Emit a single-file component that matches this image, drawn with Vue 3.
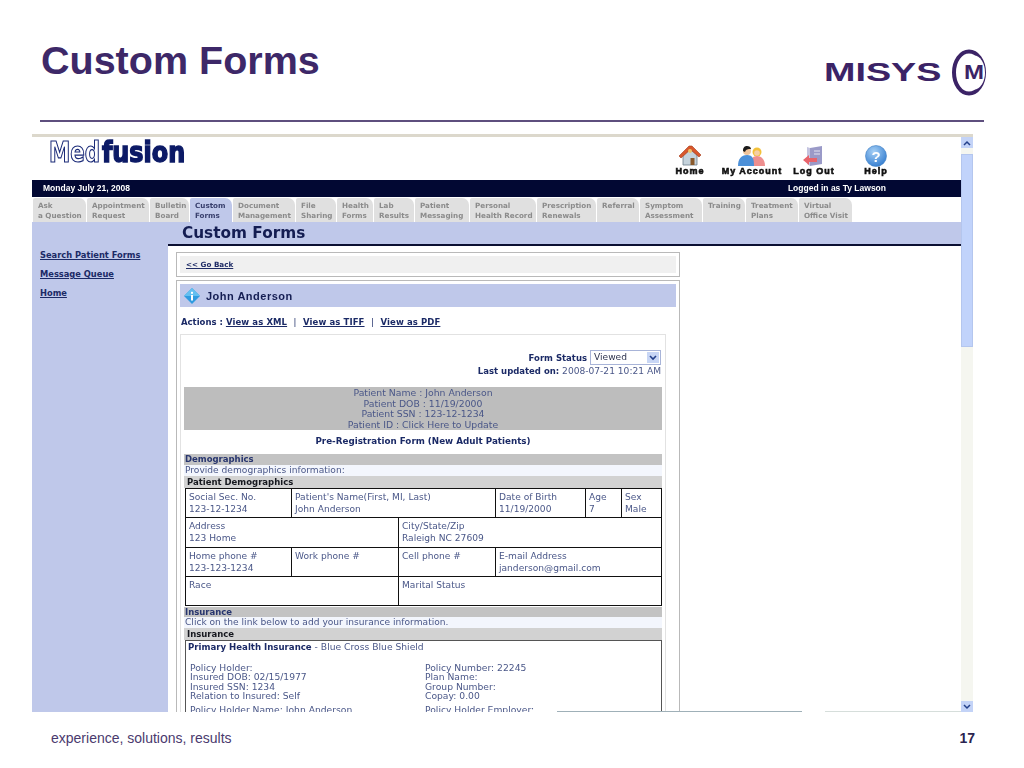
<template>
  <div class="slide">
    <header class="slide-head">
      <h1>Custom Forms</h1>
      <svg class="misys" width="164" height="50" viewBox="0 0 164 50">
        <text transform="translate(0 34) scale(1.51 1)" class="misys-word">MISYS</text>
        <ellipse cx="145" cy="25.500" rx="15" ry="21" fill="none" stroke="#3b2366" stroke-width="4" />
        <ellipse cx="150" cy="25.500" rx="11" ry="17" fill="#fff" />
        <text x="140" y="32" textLength="20" lengthAdjust="spacingAndGlyphs" class="misys-m">M</text>
      </svg>
    </header>
    <div class="rule"></div>

    <section class="screen">
      <div class="app">
        <div class="brand-row">
          <svg class="medfusion" width="140" height="30" viewBox="0 0 140 30">
            <text transform="translate(1 25) scale(.82 1)" class="med">Med</text>
            <text transform="translate(54 25) scale(.915 1)" class="fusion">fusion</text>
          </svg>
          <nav class="top-nav">
            <a class="top-item">
              <svg width="24" height="22" viewBox="0 0 24 22">
                <path d="M5 10v10h14V10L12 4z" fill="#c5d3dc" stroke="#6d7f8c" stroke-width=".8" />
                <rect x="12.500" y="13" width="4" height="7" fill="#8a5a2c" />
                <path d="M1 11 11 1h3l9 9-2 2-8.500-7.500L3 13z" fill="#d8572c" stroke="#a33a18" stroke-width=".6" />
                <circle cx="12" cy="6" r="2" fill="#f2c46a" />
              </svg>
              <span>Home</span>
            </a>
            <a class="top-item">
              <svg width="30" height="22" viewBox="0 0 30 22">
                <circle cx="20" cy="7" r="4.500" fill="#f3c13a" />
                <path d="M13 21c0-7 3-10 7-10s8 3 8 10z" fill="#ee8f8f" />
                <circle cx="20" cy="8" r="2.800" fill="#f6cfa5" />
                <circle cx="10" cy="6" r="4" fill="#f0c49a" />
                <path d="M6 6c0-4 2-5 4-5s4 1 4 3c-3 0-5 0-6 3z" fill="#1c1c1c" />
                <path d="M1 21c0-7 3-11 9-11s7 4 7 11z" fill="#4c90d8" />
              </svg>
              <span>My Account</span>
            </a>
            <a class="top-item">
              <svg width="24" height="22" viewBox="0 0 24 22">
                <path d="M8 3l12-2v18l-12 2z" fill="#9a9ac8" />
                <path d="M5 2l3 1v18l-3-2z" fill="#c4c4e0" />
                <path d="M12 6h6M12 9h6" stroke="#e4e4f2" stroke-width="1.200" />
                <path d="M1 15l6-5v3h8v4H7v3z" fill="#e8646c" />
              </svg>
              <span>Log Out</span>
            </a>
            <a class="top-item">
              <svg width="24" height="22" viewBox="0 0 24 22">
                <defs>
                  <radialGradient id="helpBall" cx=".4" cy=".3" r=".8">
                    <stop offset="0" stop-color="#a6d0f6" />
                    <stop offset="1" stop-color="#2a76cc" />
                  </radialGradient>
                </defs>
                <circle cx="12" cy="11" r="10.500" fill="url(#helpBall)" stroke="#3f7fc4" stroke-width=".6" />
                <text x="12" y="16.500" text-anchor="middle" class="help-q">?</text>
              </svg>
              <span>Help</span>
            </a>
          </nav>
        </div>

        <div class="date-bar">
          <span>Monday July 21, 2008</span>
          <span class="logged">Logged in as Ty Lawson</span>
        </div>

        <div class="tabs">
          <div
            v-for="tab in tabs"
            :key="tab.top"
            class="tab"
            :class="{ active: tab.active }"
            :style="{ width: tab.w + 'px' }"
          >
            {{ tab.top }}<br />{{ tab.bottom }}
          </div>
        </div>

        <div class="page-body">
          <aside class="side">
            <a>Search Patient Forms</a>
            <a>Message Queue</a>
            <a>Home</a>
          </aside>

          <main class="main">
            <div class="page-title"><h2>Custom Forms</h2></div>

            <div class="panels">
              <div class="panel back-panel">
                <div class="back-inner"><a>&lt;&lt; Go Back</a></div>
              </div>

              <div class="panel form-panel">
                <div class="patient-bar">
                  <svg width="16" height="16" viewBox="0 0 16 16">
                    <path d="M8 0l8 8-8 8-8-8z" fill="#2f9be0" />
                    <path d="M8 0l8 8H0z" fill="#63bff0" />
                    <rect x="7" y="7" width="2" height="5.500" fill="#fff" />
                    <rect x="7" y="3.800" width="2" height="2" fill="#fff" />
                  </svg>
                  <span>John Anderson</span>
                </div>

                <div class="actions">
                  <b>Actions :</b>
                  <a>View as XML</a><i>|</i><a>View as TIFF</a><i>|</i><a>View as PDF</a>
                </div>

                <div class="form-box">
                  <div class="status-row">
                    <b>Form Status</b>
                    <div class="select">
                      <span>Viewed</span>
                      <em><svg width="8" height="6" viewBox="0 0 8 6"><path d="M1 1l3 3 3-3" fill="none" stroke="#24408a" stroke-width="1.600" /></svg></em>
                    </div>
                  </div>
                  <div class="updated"><b>Last updated on:</b> 2008-07-21 10:21 AM</div>

                  <div class="patient-info">
                    Patient Name : John Anderson<br />
                    Patient DOB : 11/19/2000<br />
                    Patient SSN : 123-12-1234<br />
                    Patient ID : Click Here to Update
                  </div>

                  <div class="form-title">Pre-Registration Form (New Adult Patients)</div>

                  <div class="sec-bar">Demographics</div>
                  <div class="sec-note">Provide demographics information:</div>
                  <div class="sub-bar">Patient Demographics</div>
                  <div class="demo-grid">
                    <div v-for="cell in demoCells" :key="cell.label" class="cell" :style="{ gridColumn: cell.col }">
                      {{ cell.label }}<br />{{ cell.value }}
                    </div>
                  </div>

                  <div class="sec-bar ins-gap">Insurance</div>
                  <div class="sec-note">Click on the link below to add your insurance information.</div>
                  <div class="sub-bar">Insurance</div>
                  <div class="ins-box">
                    <div class="ins-head"><b>Primary Health Insurance</b> - Blue Cross Blue Shield</div>
                    <div class="ins-cols">
                      <div>
                        Policy Holder:<br />Insured DOB: 02/15/1977<br />Insured SSN: 1234<br />Relation to Insured: Self
                      </div>
                      <div>
                        Policy Number: 22245<br />Plan Name:<br />Group Number:<br />Copay: 0.00
                      </div>
                    </div>
                    <div class="ins-cols ins-next">
                      <div>Policy Holder Name: John Anderson</div>
                      <div>Policy Holder Employer:</div>
                    </div>
                  </div>
                </div>
              </div>
            </div>
          </main>
        </div>
      </div>

      <div class="scrollbar">
        <div class="sb-btn"><svg width="8" height="6" viewBox="0 0 8 6"><path d="M1 5l3-3 3 3" fill="none" stroke="#24408a" stroke-width="1.500" /></svg></div>
        <div class="sb-thumb"></div>
        <div class="sb-track"></div>
        <div class="sb-btn"><svg width="8" height="6" viewBox="0 0 8 6"><path d="M1 1l3 3 3-3" fill="none" stroke="#24408a" stroke-width="1.500" /></svg></div>
      </div>

      <div class="cut-edge cut-a"></div>
      <div class="cut-edge cut-b"></div>
    </section>

    <footer class="slide-foot">
      <span>experience, solutions, results</span>
      <b>17</b>
    </footer>
  </div>
</template>

<script setup>
const tabs = [
  { top: "Ask", bottom: "a Question", w: 53 },
  { top: "Appointment", bottom: "Request", w: 62 },
  { top: "Bulletin", bottom: "Board", w: 39 },
  { top: "Custom", bottom: "Forms", w: 42, active: true },
  { top: "Document", bottom: "Management", w: 62 },
  { top: "File", bottom: "Sharing", w: 40 },
  { top: "Health", bottom: "Forms", w: 36 },
  { top: "Lab", bottom: "Results", w: 40 },
  { top: "Patient", bottom: "Messaging", w: 54 },
  { top: "Personal", bottom: "Health Record", w: 66 },
  { top: "Prescription", bottom: "Renewals", w: 59 },
  { top: "Referral", bottom: "", w: 42 },
  { top: "Symptom", bottom: "Assessment", w: 62 },
  { top: "Training", bottom: "", w: 42 },
  { top: "Treatment", bottom: "Plans", w: 52 },
  { top: "Virtual", bottom: "Office Visit", w: 53 },
];

const demoCells = [
  { label: "Social Sec. No.", value: "123-12-1234", col: "1 / 2" },
  { label: "Patient's Name(First, MI, Last)", value: "John Anderson", col: "2 / 4" },
  { label: "Date of Birth", value: "11/19/2000", col: "4 / 5" },
  { label: "Age", value: "7", col: "5 / 6" },
  { label: "Sex", value: "Male", col: "6 / 7" },
  { label: "Address", value: "123 Home", col: "1 / 3" },
  { label: "City/State/Zip", value: "Raleigh NC 27609", col: "3 / 7" },
  { label: "Home phone #", value: "123-123-1234", col: "1 / 2" },
  { label: "Work phone #", value: "", col: "2 / 3" },
  { label: "Cell phone #", value: "", col: "3 / 4" },
  { label: "E-mail Address", value: "janderson@gmail.com", col: "4 / 7" },
  { label: "Race", value: "", col: "1 / 3" },
  { label: "Marital Status", value: "", col: "3 / 7" },
];
</script>

<style>
html,
body {
  margin: 0;
  background: #fff;
}
</style>

<style scoped>
.slide {
  width: 1024px;
  height: 768px;
  overflow: hidden;
  background: #fff;
  font-family: "Liberation Sans", Arial, sans-serif;
}

.slide-head {
  height: 120px;
  display: flex;
  justify-content: space-between;
  padding: 0 36px 0 41px;
  box-sizing: border-box;
}

h1 {
  margin: 40px 0 0;
  font-size: 39.500px;
  line-height: 41px;
  font-weight: 700;
  color: #3d2868;
}

.misys {
  margin-top: 47px;
}

.misys-word {
  font: 700 25px "Liberation Sans", sans-serif;
  fill: #3b2366;
}

.misys-m {
  font: 700 21px "Liberation Sans", sans-serif;
  fill: #3b2366;
}

.rule {
  height: 2px;
  margin: 0 40px;
  background: #5e4f7e;
}

.screen {
  position: relative;
  width: 941px;
  height: 578px;
  margin: 12px 0 0 32px;
  display: flex;
  overflow: hidden;
  border-top: 3px solid #dcd8cc;
  box-sizing: border-box;
  font-family: "DejaVu Sans", Verdana, sans-serif;
  filter: blur(0.4px);
}

.app {
  width: 929px;
  flex: none;
  display: flex;
  flex-direction: column;
}

.brand-row {
  height: 43px;
  display: flex;
  justify-content: space-between;
  flex: none;
}

.medfusion {
  margin: 0 0 0 16px;
  overflow: visible;
}

.med {
  font: 700 29px "DejaVu Sans Condensed", "Liberation Sans", sans-serif;
  fill: #fff;
  stroke: #1a2a78;
  stroke-width: 1.200px;
}

.fusion {
  font: 700 29px "DejaVu Sans Condensed", "Liberation Sans", sans-serif;
  fill: #0c1a66;
  stroke: #0c1a66;
  stroke-width: 1.400px;
}

.top-nav {
  display: flex;
  padding: 8px 54px 0 0;
}

.top-item {
  width: 62px;
  display: flex;
  flex-direction: column;
  align-items: center;
}

.top-item svg {
  display: block;
  height: 22px;
}

.top-item span {
  font: 700 9px/9px "Liberation Sans", sans-serif;
  letter-spacing: 1px;
  color: #111;
  -webkit-text-stroke: 0.6px #111;
  white-space: nowrap;
}

.help-q {
  font: 700 15px "Liberation Sans", sans-serif;
  fill: #fff;
}

.date-bar {
  height: 17px;
  flex: none;
  background: #020833;
  color: #fff;
  font: 700 8.500px/17px "Liberation Sans", sans-serif;
  display: flex;
  justify-content: space-between;
  padding: 0 75px 0 11px;
}

.tabs {
  height: 25px;
  flex: none;
  display: flex;
  padding: 1px 0 0 1px;
  box-sizing: border-box;
}

.tab {
  flex: none;
  box-sizing: border-box;
  margin-right: 1px;
  padding: 3px 0 0 5px;
  background: #e0e0e0;
  border-top-right-radius: 7px;
  border-top-left-radius: 2px;
  color: #8b8b8b;
  font-size: 7.200px;
  font-weight: 700;
  line-height: 9.500px;
  white-space: nowrap;
  overflow: hidden;
}

.tab.active {
  background: #bfc8ea;
  color: #39406e;
}

.page-body {
  flex: 1;
  min-height: 0;
  display: flex;
}

.side {
  width: 136px;
  flex: none;
  background: #bfc8ea;
  display: flex;
  flex-direction: column;
  gap: 9px;
  padding: 28px 0 0 8px;
  box-sizing: border-box;
}

.side a {
  font-size: 8.300px;
  line-height: 10px;
  font-weight: 700;
  color: #1b2a66;
  text-decoration: underline;
}

.main {
  flex: 1;
  min-width: 0;
}

.page-title {
  height: 24px;
  box-sizing: border-box;
  background: #bfc8ea;
  border-bottom: 2px solid #0b1033;
  padding-left: 14px;
}

h2 {
  margin: 0;
  font-size: 15.300px;
  line-height: 23px;
  color: #141d52;
}

.panels {
  width: 504px;
  margin: 6px 0 0 8px;
}

.panel {
  border: 1px solid #b9b9b9;
  box-sizing: border-box;
  padding: 3px;
  background: #fff;
}

.back-panel {
  height: 25px;
  margin-bottom: 3px;
}

.back-inner {
  height: 17px;
  background: #f0f0f0;
  padding-left: 6px;
  font: 700 7.200px/17px "DejaVu Sans", sans-serif;
  color: #1f2c66;
}

.back-inner a,
.actions a {
  text-decoration: underline;
}

.form-panel {
  height: 440px;
  overflow: hidden;
}

.patient-bar {
  height: 23px;
  background: #bfc8ea;
  display: flex;
  align-items: center;
  gap: 6px;
  padding-left: 4px;
  font: 700 11px "Liberation Sans", sans-serif;
  letter-spacing: 0.5px;
  color: #141d52;
}

.actions {
  height: 27px;
  padding-left: 1px;
  font-size: 8.500px;
  line-height: 31px;
  font-weight: 700;
  letter-spacing: 0.1px;
  color: #1b2a66;
  white-space: nowrap;
}

.actions b {
  margin-right: 3px;
  letter-spacing: 0;
}

.actions i {
  margin: 0 6.500px;
  font-style: normal;
  font-weight: 400;
}

.form-box {
  width: 486px;
  height: 390px;
  box-sizing: border-box;
  border: 1px solid #e2e2e2;
  padding: 15px 3px 0 3px;
  color: #4a5788;
  font-size: 9.100px;
}

.status-row {
  display: flex;
  justify-content: flex-end;
  align-items: center;
  gap: 3px;
  height: 15px;
  margin-right: 1px;
  font-weight: 400;
  color: #1b2a66;
}

.status-row b {
  font-size: 8.500px;
}

.select {
  width: 71px;
  height: 15px;
  box-sizing: border-box;
  border: 1px solid #a8b4d8;
  display: flex;
  justify-content: space-between;
  padding-left: 3px;
  line-height: 13px;
  color: #2f3550;
}

.select em {
  width: 12px;
  margin: 1px;
  background: #c8d6f5;
  display: flex;
  align-items: center;
  justify-content: center;
}

.updated {
  height: 22px;
  margin-right: 1px;
  text-align: right;
  line-height: 13px;
}

.updated b {
  color: #1b2a66;
  font-size: 8.500px;
}

.patient-info {
  height: 43px;
  box-sizing: border-box;
  padding-top: 1px;
  background: #bdbdbd;
  text-align: center;
  font-size: 9.300px;
  line-height: 10.700px;
}

.form-title {
  height: 24px;
  text-align: center;
  font-size: 8.750px;
  line-height: 23px;
  font-weight: 700;
  color: #1b2a66;
}

.sec-bar {
  height: 11px;
  background: #c3c3c3;
  font-size: 8.500px;
  line-height: 11px;
  font-weight: 700;
  padding-left: 1px;
  color: #27356e;
}

.sec-note {
  height: 11px;
  background: #f3f6fd;
  padding-left: 1px;
  line-height: 11px;
}

.sub-bar {
  height: 12px;
  background: #d2d2d2;
  font-size: 8.500px;
  line-height: 12px;
  font-weight: 700;
  padding-left: 3px;
  color: #16181f;
}

.demo-grid {
  width: 477px;
  margin-left: 1px;
  box-sizing: border-box;
  border-top: 1px solid #111;
  border-left: 1px solid #111;
  display: grid;
  grid-template-columns: 106px 107px 97px 90px 36px 40px;
  grid-auto-rows: 29.250px;
}

.cell {
  box-sizing: border-box;
  border-right: 1px solid #111;
  border-bottom: 1px solid #111;
  padding: 2px 0 0 3px;
  font-size: 9.100px;
  line-height: 12px;
  white-space: nowrap;
}

.ins-gap {
  height: 10px;
  line-height: 10px;
  margin-top: 1px;
}

.ins-box {
  width: 477px;
  height: 90px;
  margin-left: 1px;
  box-sizing: border-box;
  border: 1px solid #555;
  padding: 0 0 0 2px;
  font-size: 9.200px;
}

.ins-head {
  height: 22px;
  line-height: 12px;
}

.ins-head b {
  color: #1b2a66;
  font-size: 8.600px;
}

.ins-cols {
  display: grid;
  grid-template-columns: 235px 1fr;
  padding-left: 2px;
  line-height: 9.400px;
}

.ins-next {
  margin-top: 4px;
}

.scrollbar {
  width: 12px;
  flex: none;
  display: flex;
  flex-direction: column;
  background: #f5f6f0;
}

.sb-btn {
  height: 11px;
  flex: none;
  background: #c3d3f7;
  display: flex;
  align-items: center;
  justify-content: center;
}

.sb-thumb {
  height: 193px;
  flex: none;
  margin-top: 6px;
  background: #c1d3fb;
  border: 1px solid #b4c6ee;
  box-sizing: border-box;
}

.sb-track {
  flex: 1;
}

.cut-edge {
  position: absolute;
  bottom: 0;
  height: 1px;
  background: #9fb0b8;
}

.cut-a {
  left: 525px;
  width: 245px;
}

.cut-b {
  left: 793px;
  width: 136px;
  background: #d6dedb;
}

.slide-foot {
  display: flex;
  justify-content: space-between;
  padding: 18px 49px 0 51px;
  font-size: 14px;
  line-height: 17px;
  color: #4a3a6e;
}

.slide-foot b {
  color: #2b2350;
}
</style>
